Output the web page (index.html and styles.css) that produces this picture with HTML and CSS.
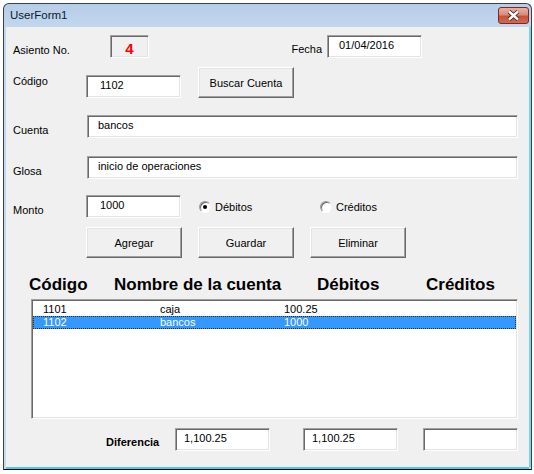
FILE: index.html
```html
<!DOCTYPE html>
<html>
<head>
<meta charset="utf-8">
<link rel="stylesheet" href="styles.css">
</head>
<body>
<div class="window">
  <div class="titlebar">
    <span class="title">UserForm1</span>
    <div class="close">
      <svg width="31" height="17" viewBox="0 0 31 17">
        <path d="M11 4.5 L20 12.5 M20 4.5 L11 12.5" stroke="#4a1a12" stroke-width="4.2" fill="none"/>
        <path d="M11 4.5 L20 12.5 M20 4.5 L11 12.5" stroke="#ffffff" stroke-width="2.4" fill="none"/>
      </svg>
    </div>
  </div>
  <div class="client">
    <div class="row row-a">
      <span class="lbl lbl-asiento">Asiento No.</span>
      <div class="box-asiento">4</div>
      <span class="lbl lbl-fecha">Fecha</span>
      <div class="tb tb-fecha">01/04/2016</div>
    </div>
    <div class="row row-b">
      <span class="lbl lbl-codigo">Código</span>
      <div class="tb tb-codigo">1102</div>
      <button class="btn btn-buscar">Buscar Cuenta</button>
    </div>
    <div class="row row-c">
      <span class="lbl lbl-wide">Cuenta</span>
      <div class="tb tb-wide">bancos</div>
    </div>
    <div class="row row-d">
      <span class="lbl lbl-wide">Glosa</span>
      <div class="tb tb-wide">inicio de operaciones</div>
    </div>
    <div class="row row-e">
      <span class="lbl lbl-monto">Monto</span>
      <div class="tb tb-monto">1000</div>
      <div class="radio radio-deb"><span class="circle checked"></span><span class="rtext">Débitos</span></div>
      <div class="radio"><span class="circle"></span><span class="rtext">Créditos</span></div>
    </div>
    <div class="row row-f">
      <button class="btn btn-first">Agregar</button>
      <button class="btn btn-next">Guardar</button>
      <button class="btn btn-next">Eliminar</button>
    </div>
    <div class="headers">
      <span class="h h1">Código</span>
      <span class="h h2">Nombre de la cuenta</span>
      <span class="h h3">Débitos</span>
      <span class="h h4">Créditos</span>
    </div>
    <div class="list">
      <div class="item"><span class="c1">1101</span><span class="c2">caja</span><span class="c3">100.25</span></div>
      <div class="item selected"><span class="c1">1102</span><span class="c2">bancos</span><span class="c3">1000</span></div>
    </div>
    <div class="row row-i">
      <span class="lbl lbl-dif">Diferencia</span>
      <div class="tb tb-sum">1,100.25</div>
      <div class="tb tb-sum tb-sum2">1,100.25</div>
      <div class="tb tb-sum tb-sum3"></div>
    </div>
  </div>
</div>
</body>
</html>
```
FILE: styles.css
```css
* { box-sizing: border-box; }
html, body { margin: 0; }
body {
  width: 534px;
  height: 474px;
  overflow: hidden;
  background: #ffffff;
  padding: 3px 0 0 3px;
  font-family: "Liberation Sans", Arial, sans-serif;
  font-size: 11px;
  color: #000;
}
.window {
  width: 529px;
  height: 467px;
  border: 1px solid #3a3f48;
  border-bottom-color: #0a0a0a;
  border-radius: 6px 6px 0 0;
  background: linear-gradient(#b6cde8, #c3d7ee 24px, #c6daf0);
  display: flex;
  flex-direction: column;
}
.titlebar {
  height: 23px;
  display: flex;
  justify-content: space-between;
  align-items: flex-start;
  padding-left: 6px;
}
.title {
  font-size: 11.5px;
  line-height: 23px;
  color: #0b1a2e;
}
.close {
  width: 31px;
  height: 17px;
  margin: 3px 2px 0 0;
  border: 1px solid #7b2a1d;
  border-radius: 3px;
  background: linear-gradient(#eab0a3, #dc8b78 45%, #c8513a 55%, #cf6a55);
  display: flex;
  align-items: center;
  justify-content: center;
  overflow: hidden;
}
.close svg { display: block; flex: none; }
.client {
  flex: 1;
  margin: 0 2px 2px;
  background: #f0f0f0;
  box-shadow: 0 2px 0 #4fc6ee, 2px 0 0 #79d2f0;
}
.row { display: flex; align-items: flex-start; }
.lbl { line-height: 13px; white-space: nowrap; }

.tb {
  height: 23px;
  background: #fff;
  border: 1px solid;
  border-color: #a0a0a0 #ffffff #ffffff #a0a0a0;
  box-shadow: inset 1px 1px 0 #696969, inset -1px -1px 0 #e3e3e3;
  padding-top: 3px;
  line-height: 13px;
  white-space: nowrap;
}

.row-a { margin-top: 8px; height: 23px; }
.lbl-asiento { margin-left: 7px; width: 97px; padding-top: 9px; }
.box-asiento {
  width: 39px;
  height: 23px;
  background: #f0f0f0;
  border: 1px solid;
  border-color: #a0a0a0 #ffffff #ffffff #a0a0a0;
  box-shadow: inset 1px 1px 0 #696969, inset -1px -1px 0 #e3e3e3;
  color: #ff0000;
  font-weight: bold;
  font-size: 15px;
  line-height: 19px;
  padding-top: 3px;
  text-align: center;
}
.lbl-fecha { width: 178px; text-align: right; padding-right: 5px; padding-top: 8px; }
.tb-fecha { width: 95px; padding-left: 11px; }

.row-b { margin-top: 9px; }
.lbl-codigo { margin-left: 7px; width: 73px; padding-top: 8px; }
.tb-codigo { margin-top: 8px; width: 95px; padding-left: 13px; }

.btn {
  width: 96px;
  height: 31px;
  padding: 0;
  background: #f0f0f0;
  border: 1px solid;
  border-color: #ffffff #696969 #696969 #ffffff;
  box-shadow: inset -1px -1px 0 #a0a0a0, inset 1px 1px 0 #e3e3e3;
  font-family: "Liberation Sans", Arial, sans-serif;
  font-size: 11px;
  color: #000;
}
.btn-buscar { margin-left: 17px; }

.row-c { margin-top: 17px; }
.row-d { margin-top: 18px; }
.lbl-wide { margin-left: 7px; width: 74px; padding-top: 9px; }
.tb-wide { width: 431px; padding-left: 10px; }

.row-e { margin-top: 16px; }
.lbl-monto { margin-left: 7px; width: 73px; padding-top: 9px; }
.tb-monto { width: 95px; padding-left: 13px; }
.radio {
  display: flex;
  align-items: center;
  height: 12px;
  margin-top: 6px;
}
.radio-deb { margin-left: 18px; width: 121px; }
.circle {
  position: relative;
  width: 12px;
  height: 12px;
  border-radius: 50%;
  background: #fff;
  border: 1px solid;
  border-color: #9a9a9a #f4f4f4 #ffffff #9a9a9a;
  box-shadow: inset 1px 1px 0 #6a6a6a;
  flex: none;
}
.circle.checked::after {
  content: "";
  position: absolute;
  left: 3px;
  top: 3px;
  width: 4px;
  height: 4px;
  border-radius: 50%;
  background: #000;
}
.rtext { margin-left: 4px; line-height: 13px; }

.row-f { margin-top: 9px; }
.btn-first { margin-left: 80px; }
.btn-next { margin-left: 16px; }

.headers {
  margin-top: 17px;
  height: 20px;
  display: flex;
  padding-left: 23px;
  font-weight: bold;
  font-size: 17px;
  line-height: 20px;
  white-space: nowrap;
}
.h1 { width: 85px; }
.h2 { width: 203px; }
.h3 { width: 109px; }

.list {
  margin: 4px 0 0 25px;
  width: 487px;
  height: 120px;
  background: #fff;
  border: 1px solid;
  border-color: #a0a0a0 #ffffff #ffffff #a0a0a0;
  box-shadow: inset 1px 1px 0 #696969, inset -1px -1px 0 #e3e3e3;
  padding: 3px 1px 0 1px;
}
.item {
  display: flex;
  height: 13px;
  line-height: 13px;
  white-space: nowrap;
}
.item .c1 { width: 127px; padding-left: 10px; }
.item .c2 { width: 124px; }
.item.selected {
  background: #3399ff;
  color: #fff;
  outline: 1px dotted #3a2a10;
  outline-offset: -1px;
}

.row-i { margin-top: 9px; }
.lbl-dif { margin-left: 100px; width: 69px; padding-top: 8px; font-weight: bold; }
.tb-sum { width: 95px; padding-left: 8px; }
.tb-sum2 { margin-left: 33px; }
.tb-sum3 { margin-left: 25px; }
```
